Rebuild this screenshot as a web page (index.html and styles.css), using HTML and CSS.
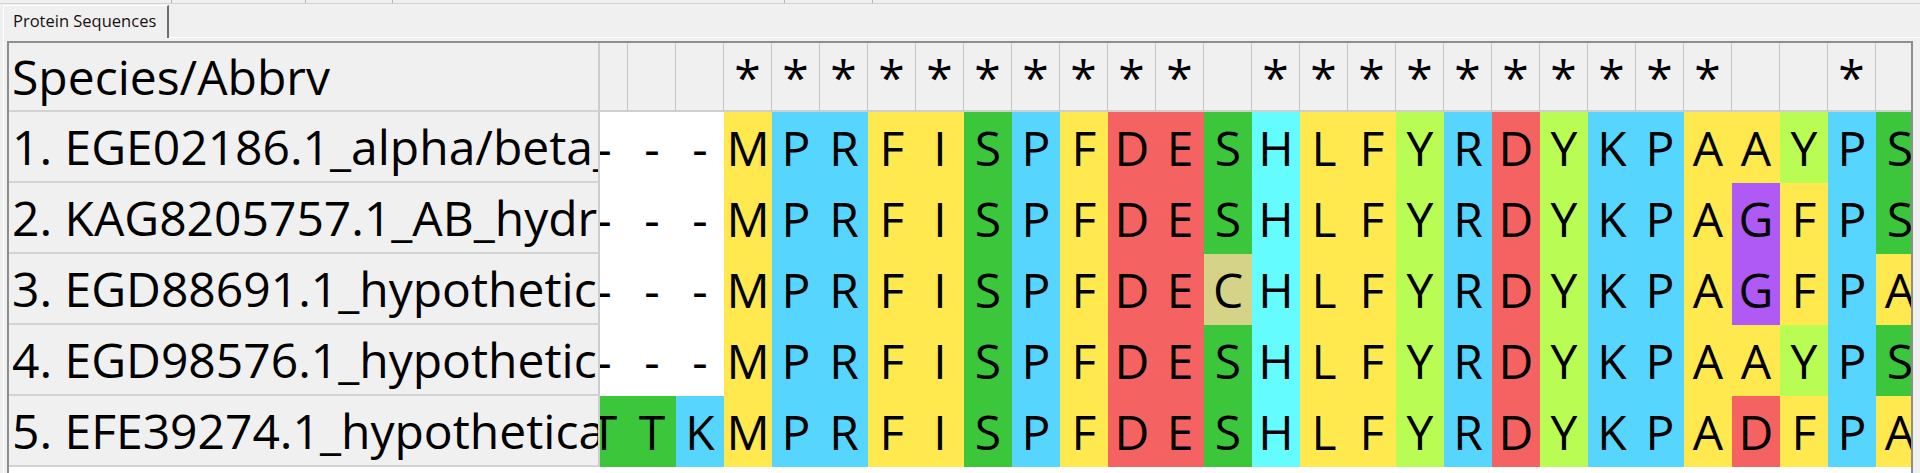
FILE: index.html
```html
<!DOCTYPE html>
<html>
<head>
<meta charset="utf-8">
<link rel="stylesheet" href="styles.css">
</head>
<body>
<div class="topbar"><span class="t1"></span><span class="t2"></span><span class="t3"></span><span class="t4"></span><span class="t5"></span></div>
<div class="tabstrip"><div class="tab">Protein Sequences</div><div class="tabrest"></div></div>
<div class="content">
<div class="panel">
  <div class="row head">
    <div class="name">Species/Abbrv</div>
    <div class="seq">
      <div class="c"></div><div class="c"></div><div class="c"></div>
      <div class="c">*</div><div class="c">*</div><div class="c">*</div><div class="c">*</div><div class="c">*</div><div class="c">*</div><div class="c">*</div><div class="c">*</div><div class="c">*</div><div class="c">*</div>
      <div class="c"></div>
      <div class="c">*</div><div class="c">*</div><div class="c">*</div><div class="c">*</div><div class="c">*</div><div class="c">*</div><div class="c">*</div><div class="c">*</div><div class="c">*</div><div class="c">*</div>
      <div class="c"></div><div class="c"></div><div class="c">*</div><div class="c"></div>
    </div>
  </div>
  <div class="row">
    <div class="name">1. EGE02186.1_alpha/beta_hydrolase</div>
    <div class="seq">
      <div class="c w">-</div><div class="c w">-</div><div class="c w">-</div>
      <div class="c y">M</div><div class="c b">P</div><div class="c b">R</div><div class="c y">F</div><div class="c y">I</div><div class="c g">S</div><div class="c b">P</div><div class="c y">F</div><div class="c r">D</div><div class="c r">E</div><div class="c g">S</div>
      <div class="c h">H</div><div class="c y">L</div><div class="c y">F</div><div class="c l">Y</div><div class="c b">R</div><div class="c r">D</div><div class="c l">Y</div><div class="c b">K</div><div class="c b">P</div><div class="c y">A</div>
      <div class="c y">A</div><div class="c l">Y</div><div class="c b">P</div><div class="c g">S</div>
    </div>
  </div>
  <div class="row">
    <div class="name">2. KAG8205757.1_AB_hydrolase</div>
    <div class="seq">
      <div class="c w">-</div><div class="c w">-</div><div class="c w">-</div>
      <div class="c y">M</div><div class="c b">P</div><div class="c b">R</div><div class="c y">F</div><div class="c y">I</div><div class="c g">S</div><div class="c b">P</div><div class="c y">F</div><div class="c r">D</div><div class="c r">E</div><div class="c g">S</div>
      <div class="c h">H</div><div class="c y">L</div><div class="c y">F</div><div class="c l">Y</div><div class="c b">R</div><div class="c r">D</div><div class="c l">Y</div><div class="c b">K</div><div class="c b">P</div><div class="c y">A</div>
      <div class="c p">G</div><div class="c y">F</div><div class="c b">P</div><div class="c g">S</div>
    </div>
  </div>
  <div class="row">
    <div class="name">3. EGD88691.1_hypothetical_protein</div>
    <div class="seq">
      <div class="c w">-</div><div class="c w">-</div><div class="c w">-</div>
      <div class="c y">M</div><div class="c b">P</div><div class="c b">R</div><div class="c y">F</div><div class="c y">I</div><div class="c g">S</div><div class="c b">P</div><div class="c y">F</div><div class="c r">D</div><div class="c r">E</div><div class="c k">C</div>
      <div class="c h">H</div><div class="c y">L</div><div class="c y">F</div><div class="c l">Y</div><div class="c b">R</div><div class="c r">D</div><div class="c l">Y</div><div class="c b">K</div><div class="c b">P</div><div class="c y">A</div>
      <div class="c p">G</div><div class="c y">F</div><div class="c b">P</div><div class="c y">A</div>
    </div>
  </div>
  <div class="row">
    <div class="name">4. EGD98576.1_hypothetical_protein</div>
    <div class="seq">
      <div class="c w">-</div><div class="c w">-</div><div class="c w">-</div>
      <div class="c y">M</div><div class="c b">P</div><div class="c b">R</div><div class="c y">F</div><div class="c y">I</div><div class="c g">S</div><div class="c b">P</div><div class="c y">F</div><div class="c r">D</div><div class="c r">E</div><div class="c g">S</div>
      <div class="c h">H</div><div class="c y">L</div><div class="c y">F</div><div class="c l">Y</div><div class="c b">R</div><div class="c r">D</div><div class="c l">Y</div><div class="c b">K</div><div class="c b">P</div><div class="c y">A</div>
      <div class="c y">A</div><div class="c l">Y</div><div class="c b">P</div><div class="c g">S</div>
    </div>
  </div>
  <div class="row">
    <div class="name">5. EFE39274.1_hypothetical_protein</div>
    <div class="seq">
      <div class="c g">T</div><div class="c g">T</div><div class="c b">K</div>
      <div class="c y">M</div><div class="c b">P</div><div class="c b">R</div><div class="c y">F</div><div class="c y">I</div><div class="c g">S</div><div class="c b">P</div><div class="c y">F</div><div class="c r">D</div><div class="c r">E</div><div class="c g">S</div>
      <div class="c h">H</div><div class="c y">L</div><div class="c y">F</div><div class="c l">Y</div><div class="c b">R</div><div class="c r">D</div><div class="c l">Y</div><div class="c b">K</div><div class="c b">P</div><div class="c y">A</div>
      <div class="c r">D</div><div class="c y">F</div><div class="c b">P</div><div class="c y">A</div>
    </div>
  </div>
</div>
</div>
</body>
</html>
```
FILE: styles.css
```css
html, body {
  margin: 0;
  padding: 0;
}
body {
  background: #f0f0f0;
  font-family: "Open Sans", "Noto Sans", sans-serif;
  color: #000;
  width: 1920px;
  height: 473px;
  overflow: hidden;
}
.topbar {
  display: flex;
  height: 3px;
  border-bottom: 1px solid #d2d2d2;
}
.topbar span {
  flex: none;
  box-sizing: border-box;
  border-right: 1px solid #b4b4b4;
}
.topbar .t1 { width: 172px; }
.topbar .t2 { width: 134px; }
.topbar .t3 { width: 87px; }
.topbar .t4 { width: 392px; }
.topbar .t5 { width: 88px; }

.tabstrip {
  display: flex;
  height: 34px;
}
.tab {
  flex: none;
  margin-left: 3px;
  margin-top: 1px;
  width: 166px;
  height: 33px;
  box-sizing: border-box;
  border-left: 1px solid #ffffff;
  border-top: 1px solid #ffffff;
  border-right: 2px solid #6e6e6e;
  padding-left: 9px;
  font-size: 16.5px;
  line-height: 30px;
  color: #1a1010;
  white-space: nowrap;
}
.tabrest {
  flex: 1;
  border-bottom: 1px solid #ffffff;
}
.content {
  margin-left: 3px;
  border-left: 1px solid #ffffff;
  padding: 3px 0 0 3px;
  height: 432px;
}
.panel {
  width: 1906px;
  height: 432px;
  box-sizing: border-box;
  border: 2px solid #8e8e8e;
  border-bottom: none;
  background: #ffffff;
  overflow: hidden;
}
.row {
  display: flex;
  height: 71px;
}
.row.head {
  height: 69px;
}
.name {
  flex: none;
  width: 591px;
  box-sizing: border-box;
  background: #f0f0f0;
  border-right: 2px solid #cdcdcd;
  border-bottom: 2px solid #d3d3d3;
  padding-left: 3px;
  font-size: 48px;
  white-space: nowrap;
  overflow: hidden;
  display: flex;
  align-items: center;
}
.seq {
  flex: 1;
  min-width: 0;
  display: flex;
  overflow: hidden;
}
.seq .c:first-child {
  margin-left: -20px;
}
.c {
  flex: none;
  width: 48px;
  box-sizing: border-box;
  display: flex;
  align-items: center;
  justify-content: center;
  font-size: 48px;
}
.head .c {
  background: #f0f0f0;
  border-right: 1px solid #c6c6c6;
  border-bottom: 2px solid #cfcfcf;
}
.w { background: #ffffff; }
.y { background: #ffe94e; }
.b { background: #56d6fe; }
.g { background: #3cc63c; }
.r { background: #f46262; }
.h { background: #64fcfe; }
.l { background: #b8fc54; }
.p { background: #b05af6; }
.k { background: #d4d388; }
```
